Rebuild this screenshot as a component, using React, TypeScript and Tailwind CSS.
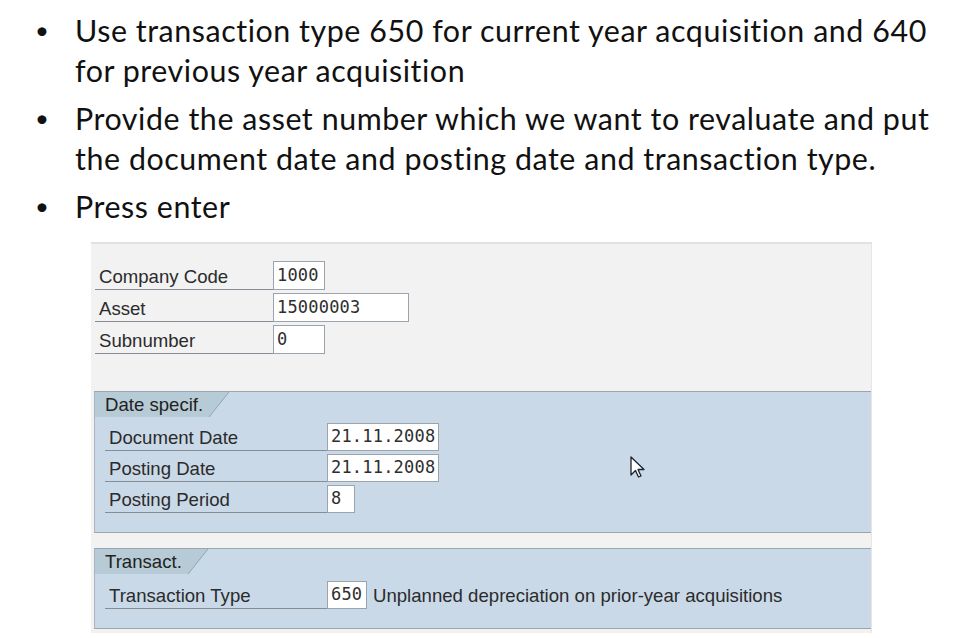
const sapFont = { fontFamily: '"Liberation Sans", Arial, sans-serif' };

const Bullet = ({ lines }: { lines: string[] }) => (
  <li className="flex">
    <span className="w-[75px] shrink-0 pl-[35px] text-[24px] leading-[40px]">•</span>
    <div>
      {lines.map((l) => (
        <div key={l} className="whitespace-nowrap">
          {l}
        </div>
      ))}
    </div>
  </li>
);

const Field = ({
  label,
  value,
  labelW,
  inputW,
  h = 29,
}: {
  label: string;
  value: string;
  labelW: string;
  inputW: string;
  h?: number;
}) => (
  <div className={`flex ${h === 29 ? "h-[29px]" : "h-[28px]"}`}>
    <div
      className={`${labelW} shrink-0 border-b border-[#858c93] flex items-center pt-[3px] pl-[4px] text-[18.6px] text-[#2b2b2b]`}
    >
      {label}
    </div>
    <div
      className={`${inputW} shrink-0 bg-white border border-[#9ba4ad] flex items-center pl-[3px] text-[17px] text-[#2e2e2e] font-['DejaVu_Sans_Mono',monospace] tracking-[0.2px]`}
    >
      {value}
    </div>
  </div>
);

const Tab = ({ title, w }: { title: string; w: string }) => (
  <div className="flex h-[25px]">
    <div className={`${w} bg-[#b6cbd5] pl-[10px] flex items-center text-[18.6px] text-[#222]`}>
      {title}
    </div>
    <svg width="20" height="25" className="block">
      <polygon points="0,0 20,0 0,25" fill="#b6cbd5" />
      <line x1="20" y1="0" x2="0" y2="25" stroke="#8fa6b2" strokeWidth="1" />
    </svg>
  </div>
);

export default function App() {
  return (
    <div className="w-[974px] h-[638px] bg-white overflow-hidden relative">
      <ul
        className="pt-[10px] flex flex-col gap-[8px] text-[30.4px] leading-[40px] text-[#111] tracking-[0.55px]"
        style={{ fontFamily: 'Lato, "Open Sans", sans-serif' }}
      >
        <Bullet
          lines={[
            "Use transaction type 650 for current year acquisition and 640",
            "for previous year acquisition",
          ]}
        />
        <Bullet
          lines={[
            "Provide the asset number which we want to revaluate and put",
            "the document date and posting date and transaction type.",
          ]}
        />
        <Bullet lines={["Press enter"]} />
      </ul>

      <div
        className="absolute left-[91px] top-[242px] w-[781px] h-[391px] bg-[#f2f2f2] border-t-[2px] border-[#e2e2e2] border-r border-r-[#e6e6e6] flex flex-col"
        style={sapFont}
      >
        <div className="h-[147px] pt-[17px] pl-[4px] flex flex-col gap-[3px]">
          <Field label="Company Code" value="1000" labelW="w-[178px]" inputW="w-[52px]" />
          <Field label="Asset" value="15000003" labelW="w-[178px]" inputW="w-[136px]" />
          <Field label="Subnumber" value="0" labelW="w-[178px]" inputW="w-[52px]" />
        </div>

        <div className="ml-[3px] h-[142px] bg-[#cad9e8] border-t border-t-[#9aa5b0] border-l border-l-[#aab4bd] border-b border-b-[#9aa5b0] flex flex-col">
          <Tab title="Date specif." w="w-[114px]" />
          <div className="pt-[6px] pl-[10px] flex flex-col gap-[3px]">
            <Field label="Document Date" value="21.11.2008" labelW="w-[222px]" inputW="w-[112px]" h={28} />
            <Field label="Posting Date" value="21.11.2008" labelW="w-[222px]" inputW="w-[112px]" h={28} />
            <Field label="Posting Period" value="8" labelW="w-[222px]" inputW="w-[28px]" h={28} />
          </div>
        </div>

        <div className="ml-[3px] mt-[15px] h-[81px] bg-[#cad9e8] border-t border-t-[#9aa5b0] border-l border-l-[#aab4bd] border-b border-b-[#9aa5b0] flex flex-col">
          <Tab title="Transact." w="w-[93px]" />
          <div className="pt-[6px] pl-[10px] flex items-center">
            <Field label="Transaction Type" value="650" labelW="w-[222px]" inputW="w-[40px]" h={28} />
            <span className="ml-[6px] pt-[2px] text-[18.6px] text-[#2b2b2b]">
              Unplanned depreciation on prior-year acquisitions
            </span>
          </div>
        </div>

        <svg
          width="16"
          height="24"
          viewBox="0 0 16 24"
          className="absolute left-[539px] top-[212px]"
        >
          <path
            d="M1 1 L1 19 L5.5 14.5 L8.5 21 L11 20 L8 13.5 L14 13.5 Z"
            fill="#fff"
            stroke="#1a2430"
            strokeWidth="1.3"
            strokeLinejoin="round"
          />
        </svg>
      </div>
    </div>
  );
}
